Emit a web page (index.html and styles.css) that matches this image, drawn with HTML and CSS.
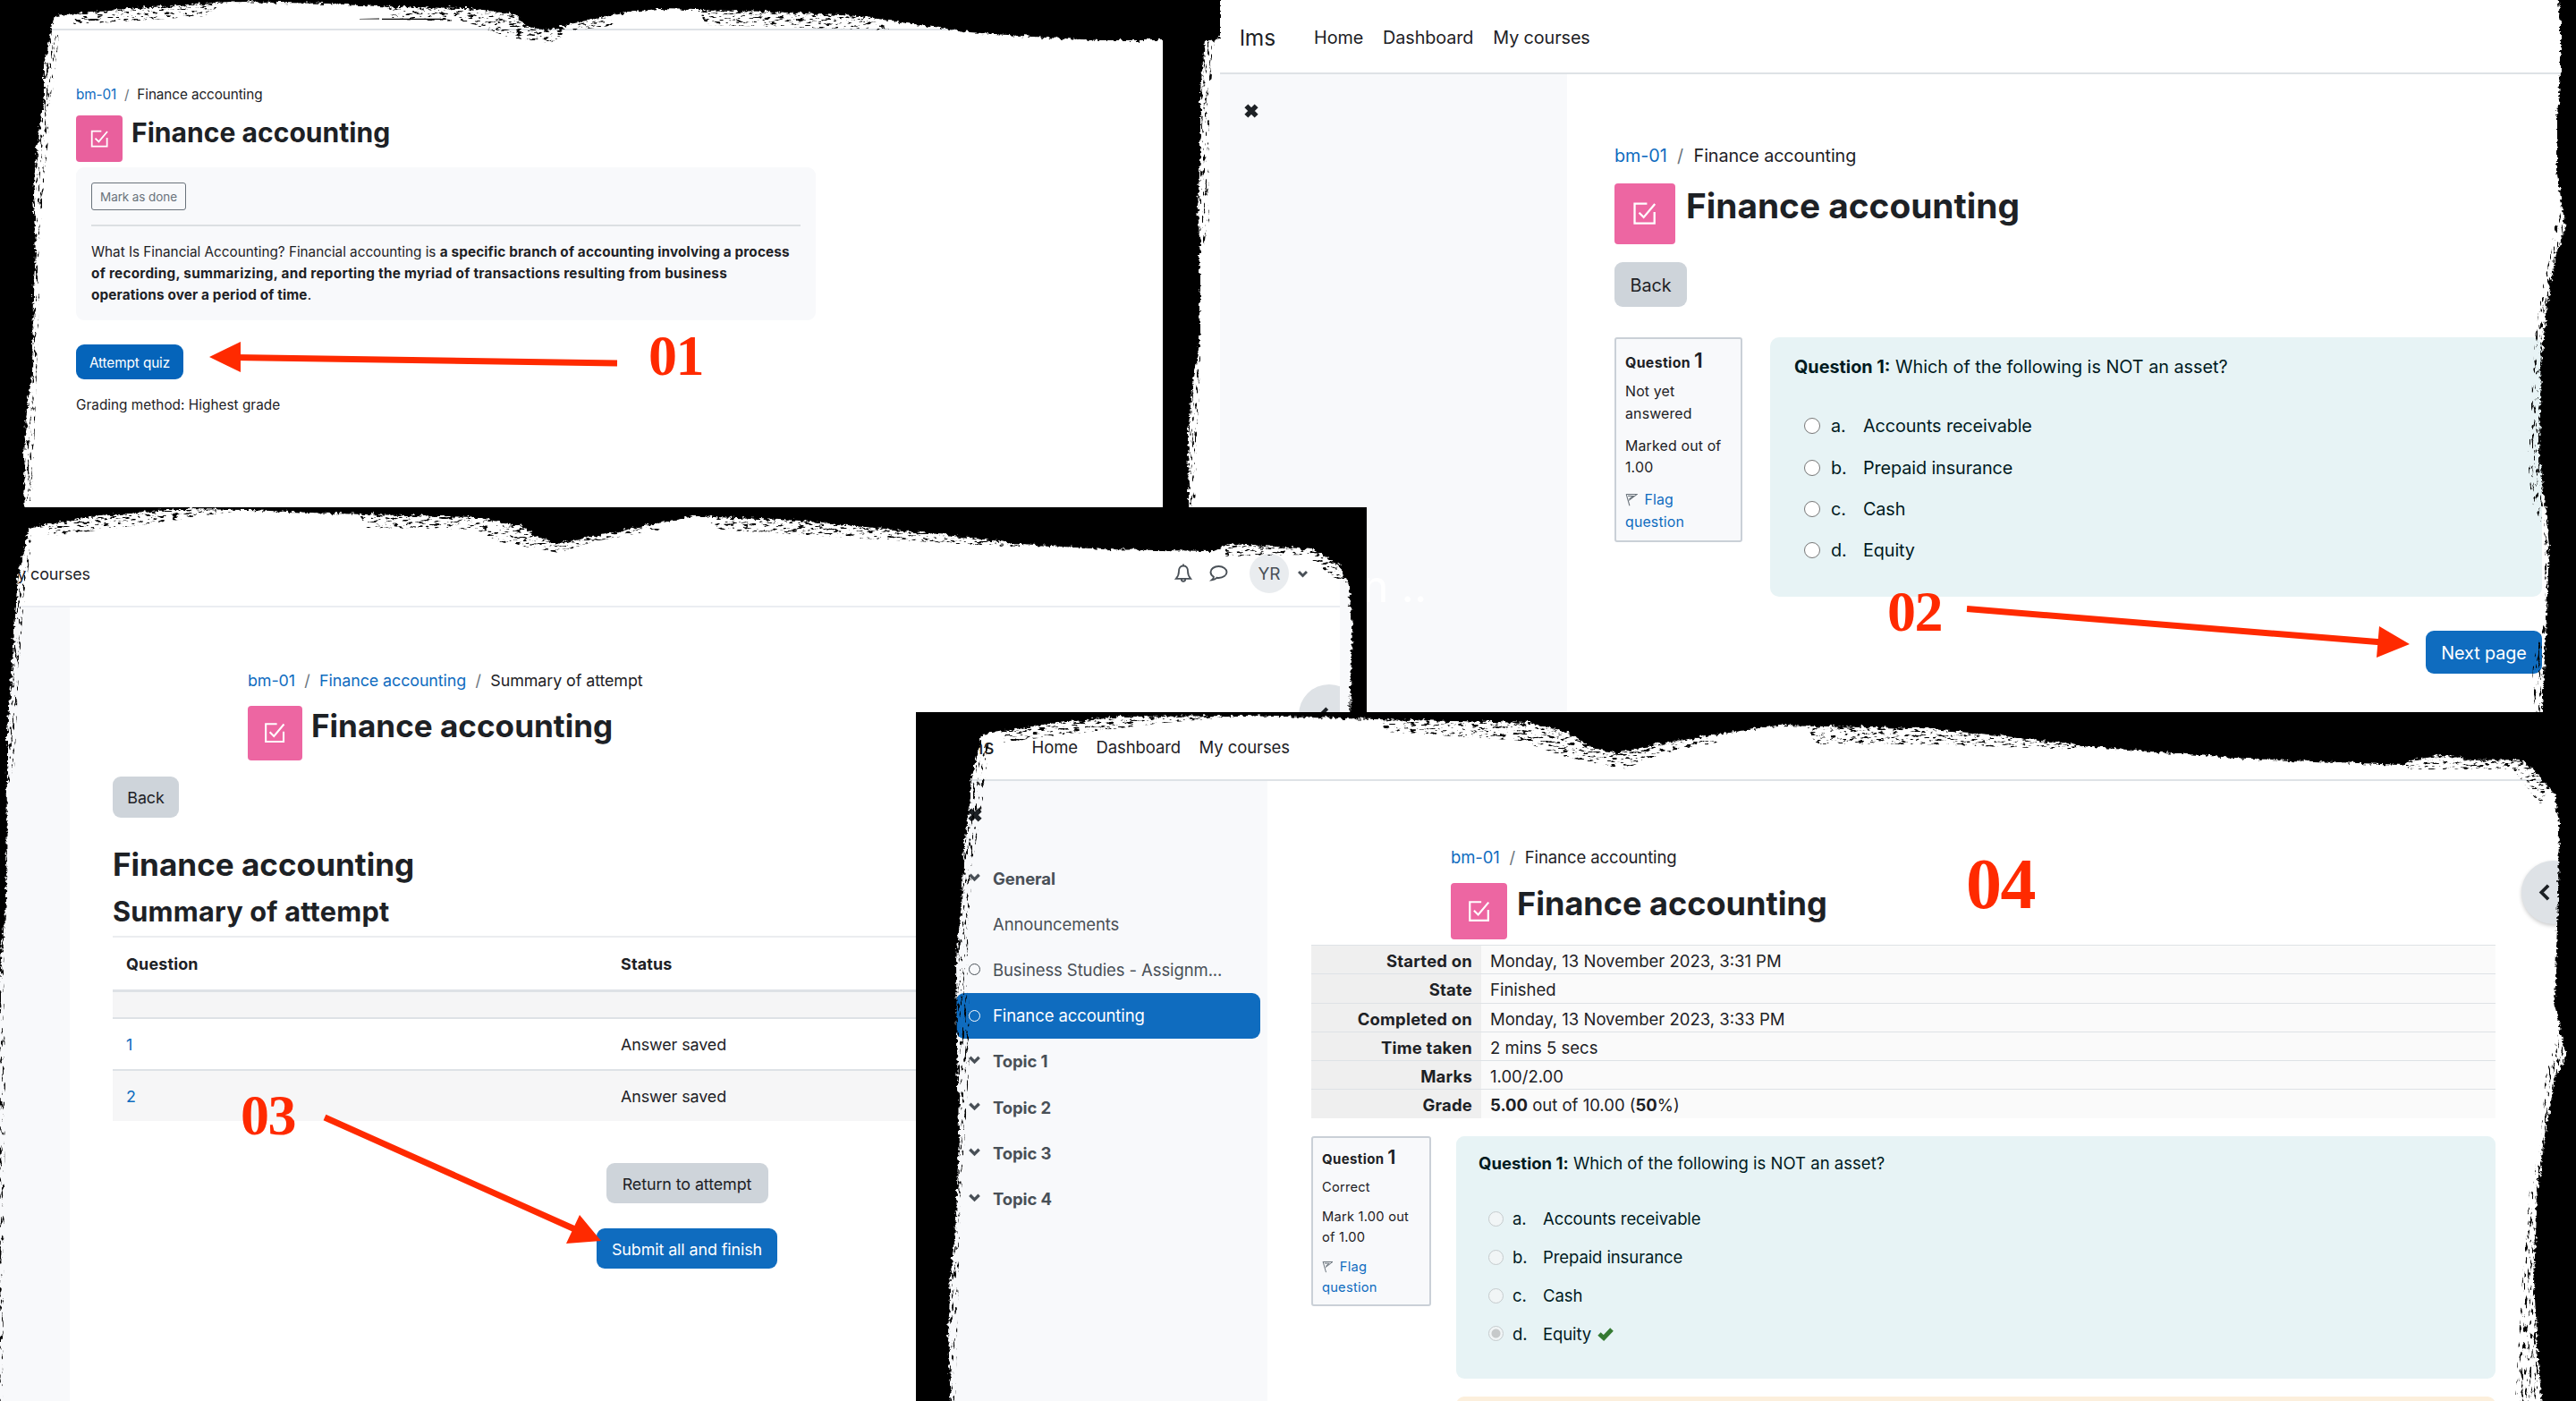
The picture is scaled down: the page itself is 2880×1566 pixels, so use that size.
FILE: index.html
```
<!DOCTYPE html>
<html lang="en">
<head>
<meta charset="utf-8">
<title>Quiz attempt guide</title>
<link rel="stylesheet" href="styles.css">
</head>
<body>
<svg class="defs" width="0" height="0">
  <defs>
    <symbol id="quiz" viewBox="0 0 24 24"><path d="M14.300 2.900H2.900v18.200h18.200V10.700M7 11.300l4.200 4.200L21.500 3.200" fill="none" stroke="currentColor" stroke-width="1.900"/></symbol>
    <symbol id="flag" viewBox="0 0 16 16"><path d="M1.300 1l4.200 14.500M1.300 1.300h13.200L4.500 9M3.500 3.300l6.500.2-5 3.700" fill="none" stroke="currentColor" stroke-width="1.200"/></symbol>
    <symbol id="cross" viewBox="0 0 16 16"><path d="M3 3l10 10M13 3L3 13" stroke="currentColor" stroke-width="5"/></symbol>
    <symbol id="down" viewBox="0 0 16 16"><path d="M2.500 5L8 10.500 13.500 5" fill="none" stroke="currentColor" stroke-width="3.600"/></symbol>
    <symbol id="left" viewBox="0 0 16 16"><path d="M11 1.500L4.500 8l6.500 6.500" fill="none" stroke="currentColor" stroke-width="3.200"/></symbol>
    <symbol id="bell" viewBox="0 0 20 22"><path d="M10 2.500c-3.600 0-5 2.800-5 6 0 4.500-1.500 6.500-3.200 8.300h16.400C16.500 15 15 13 15 8.500c0-3.200-1.400-6-5-6zM10 2.500V.5M7.800 17.500c0 3 4.400 3 4.400 0" fill="none" stroke="currentColor" stroke-width="1.800"/></symbol>
    <symbol id="chat" viewBox="0 0 22 20"><path d="M11.500 2C6.500 2 2.500 4.800 2.500 8.500c0 2.200 1.300 4 3.400 5.200 0 1.400-.9 2.600-2 3.500 2.300-.2 4.200-1 5.500-2.400.7.100 1.400.2 2.100.2 5 0 9-2.900 9-6.500S16.500 2 11.500 2z" fill="none" stroke="currentColor" stroke-width="1.900"/></symbol>
    <symbol id="check" viewBox="0 0 18 16"><path d="M2 8l5 4.500L16 3" fill="none" stroke="currentColor" stroke-width="5"/></symbol>
    <filter id="rough" x="-5%" y="-5%" width="110%" height="110%">
      <feTurbulence type="fractalNoise" baseFrequency="0.2 0.24" numOctaves="4" seed="4" result="n"/>
      <feDisplacementMap in="SourceGraphic" in2="n" scale="7" xChannelSelector="R" yChannelSelector="G"/>
    </filter>
    <filter id="dryH" x="-5%" y="-5%" width="110%" height="110%">
      <feTurbulence type="fractalNoise" baseFrequency="0.13 0.42" numOctaves="4" seed="9"/>
      <feColorMatrix values="0 0 0 0 0  0 0 0 0 0  0 0 0 0 0  8 0 0 0 -4.500" result="t"/>
      <feComposite in="SourceGraphic" in2="t" operator="in"/>
    </filter>
    <filter id="dryV" x="-5%" y="-5%" width="110%" height="110%">
      <feTurbulence type="fractalNoise" baseFrequency="0.42 0.1" numOctaves="4" seed="12"/>
      <feColorMatrix values="0 0 0 0 0  0 0 0 0 0  0 0 0 0 0  8 0 0 0 -4.600" result="t"/>
      <feComposite in="SourceGraphic" in2="t" operator="in"/>
    </filter>
  </defs>
</svg>

<main class="board">

  <section class="panel intro">
    <div class="rule"></div>
    <div class="body">
      <nav class="crumbs"><a>bm-01</a><i>/</i><span>Finance accounting</span></nav>
      <header class="title"><span class="tile"><svg><use href="#quiz"/></svg></span><h1>Finance accounting</h1></header>
      <div class="card">
        <button class="outline">Mark as done</button>
        <hr>
        <p>What Is Financial Accounting? Financial accounting is <b>a specific branch of accounting involving a process<br><span class="wide">of recording, summarizing, and reporting the myriad of transactions resulting from business</span><br>operations over a period of time</b>.</p>
      </div>
      <button class="btn primary">Attempt quiz</button>
      <p class="grading">Grading method: Highest grade</p>
    </div>
    <svg class="brush" viewBox="0 0 1300 568">
      <path filter="url(#rough)" d="M-40-40H1340V45L1230 45 1169 42 1084 36 960 18 857 13 735 10 700 14 637 27 612 34 590 30 575 16 526 9 441 8 367 4 257 2 153 9 61 18 56 40 49 73 49 109 41 164 37 218 40 284 37 327 36 418 30 454 27 509 28 620H-40z"/>
      <path class="dry" filter="url(#dryH)" d="M90 8L250 2 230 18 80 28zM430 5L560 8 600 32 640 25 680 20 690 28 640 34 615 48 570 42 520 24 440 22zM780 11L870 12 970 20 1000 34 870 30 790 28z"/>
      <path d="M402 21l22-.5v1h-22zM427 20.800h66v1.200h-66z"/>
      <path class="dry" filter="url(#dryV)" d="M50 24L66 40 58 110 50 200 42 300 44 330 36 560 24 560 30 300z"/>
    </svg>
  </section>

  <section class="panel attempt">
    <header class="topbar"><span class="brand">lms</span><a>Home</a><a>Dashboard</a><a>My courses</a></header>
    <div class="split">
      <aside><svg class="x"><use href="#cross"/></svg><span class="ghost">n ..</span></aside>
      <div class="body">
        <nav class="crumbs"><a>bm-01</a><i>/</i><span>Finance accounting</span></nav>
        <header class="title"><span class="tile"><svg><use href="#quiz"/></svg></span><h1>Finance accounting</h1></header>
        <button class="btn grey">Back</button>
        <div class="question">
          <div class="info">
            <h3>Question <b>1</b></h3>
            <p>Not yet<br>answered</p><p>Marked out of<br>1.00</p>
            <p><a><svg><use href="#flag"/></svg>Flag<br>question</a></p>
          </div>
          <div class="formulation">
            <p><b>Question 1:</b> Which of the following is NOT an asset?</p>
            <ul>
              <li><i class="radio"></i><em>a.</em>Accounts receivable</li>
              <li><i class="radio"></i><em>b.</em>Prepaid insurance</li>
              <li><i class="radio"></i><em>c.</em>Cash</li>
              <li><i class="radio"></i><em>d.</em>Equity</li>
            </ul>
          </div>
        </div>
        <button class="btn primary next">Next page</button>
      </div>
    </div>
    <svg class="brush" viewBox="1300 0 1580 796">
      <path filter="url(#rough)" d="M1290-20H1364V43L1347 46 1342 102 1342 178 1339 230 1341 265 1341 383 1333 434 1328 485 1330 620H1290z"/>
      <path d="M1300 0H1364V40H1300z"/>
      <path filter="url(#rough)" d="M2900-20H2857L2863 25 2863 82 2859 128 2859 194 2868 255 2857 286 2847 347 2841 408 2839 510 2847 577 2850 612 2846 714 2840 830H2900z"/>
      <path class="dry" filter="url(#dryV)" d="M1342 50L1358 44 1352 120 1352 250 1342 290 1342 400 1336 567 1326 567zM2860 230L2850 290 2836 350 2826 510 2830 560 2844 590 2846 690 2832 740 2830 796 2846 796 2852 600 2845 400 2868 260z"/>
    </svg>
  </section>

  <section class="panel summary">
    <header class="topbar">
      <a>My courses</a>
      <span class="tools"><svg class="bell"><use href="#bell"/></svg><svg class="chat"><use href="#chat"/></svg><span class="avatar">YR</span><svg class="caret"><use href="#down"/></svg></span>
    </header>
    <div class="split">
      <aside></aside>
      <div class="body">
        <div class="inset">
          <nav class="crumbs"><a>bm-01</a><i>/</i><a>Finance accounting</a><i>/</i><span>Summary of attempt</span></nav>
          <header class="title"><span class="tile"><svg><use href="#quiz"/></svg></span><h1>Finance accounting</h1></header>
        </div>
        <button class="btn grey">Back</button>
        <h2>Finance accounting</h2>
        <h3>Summary of attempt</h3>
        <div class="grid">
          <div class="row head"><span>Question</span><span>Status</span></div>
          <div class="row gap"></div>
          <div class="row"><a>1</a><span>Answer saved</span></div>
          <div class="row shade"><a>2</a><span>Answer saved</span></div>
        </div>
        <div class="actions"><button class="btn grey">Return to attempt</button><button class="btn primary">Submit all and finish</button></div>
      </div>
    </div>
    <span class="drawer"><svg><use href="#left"/></svg></span>
    <div class="edge"></div>
    <svg class="brush" viewBox="0 567 1528 999">
      <path filter="url(#rough)" d="M-40 530H1560V840H1508L1512 701 1508 656 1497 631 1467 614 1412 610 1375 608 1357 616 1234 614 1142 608 1040 596 895 582 776 577 720 588 663 600 623 608 600 600 584 588 531 578 371 574 279 570 199 569 100 578 32 590 20 643 17 688 13 752 8 817 8 849 7 1009 1 1073 -4 1137 -8 1600H-40z"/>
      <path class="dry" filter="url(#dryH)" d="M60 576L200 568 260 572 180 584 50 600zM400 572L560 578 610 596 660 597 720 588 740 592 670 604 625 618 560 606 530 592 410 590zM790 577L900 580 1060 594 1140 605 1140 612 900 598 800 592zM1370 604L1480 606 1505 650 1490 645 1460 620 1370 622z"/>
      <path class="dry" filter="url(#dryV)" d="M24 590L36 600 25 690 20 770 16 860 8 880 8 1000 4 1080 6 1200 3 1566 -4 1566 -4 1000z"/>
      <path d="M1514 567H1528V800H1514z"/>
    </svg>
  </section>

  <section class="panel review">
    <header class="topbar"><span class="brand">lms</span><a>Home</a><a>Dashboard</a><a>My courses</a></header>
    <div class="split">
      <aside>
        <svg class="x"><use href="#cross"/></svg>
        <ul class="tree">
          <li class="top"><svg><use href="#down"/></svg>General</li>
          <li><u></u>Announcements</li>
          <li><i></i>Business Studies - Assignm...</li>
          <li class="active"><i></i>Finance accounting</li>
          <li class="top"><svg><use href="#down"/></svg>Topic 1</li>
          <li class="top"><svg><use href="#down"/></svg>Topic 2</li>
          <li class="top"><svg><use href="#down"/></svg>Topic 3</li>
          <li class="top"><svg><use href="#down"/></svg>Topic 4</li>
        </ul>
      </aside>
      <div class="body">
        <div class="inset">
          <nav class="crumbs"><a>bm-01</a><i>/</i><span>Finance accounting</span></nav>
          <header class="title"><span class="tile"><svg><use href="#quiz"/></svg></span><h1>Finance accounting</h1></header>
        </div>
        <dl class="facts">
          <dt>Started on</dt><dd>Monday, 13 November 2023, 3:31 PM</dd>
          <dt>State</dt><dd>Finished</dd>
          <dt>Completed on</dt><dd>Monday, 13 November 2023, 3:33 PM</dd>
          <dt>Time taken</dt><dd>2 mins 5 secs</dd>
          <dt>Marks</dt><dd>1.00/2.00</dd>
          <dt>Grade</dt><dd><b>5.00</b> out of 10.00 (<b>50</b>%)</dd>
        </dl>
        <div class="question">
          <div class="info">
            <h3>Question <b>1</b></h3>
            <p>Correct</p><p>Mark 1.00 out<br>of 1.00</p>
            <p><a><svg><use href="#flag"/></svg>Flag<br>question</a></p>
          </div>
          <div class="formulation">
            <p><b>Question 1:</b> Which of the following is NOT an asset?</p>
            <ul>
              <li><i class="radio"></i><em>a.</em>Accounts receivable</li>
              <li><i class="radio"></i><em>b.</em>Prepaid insurance</li>
              <li><i class="radio"></i><em>c.</em>Cash</li>
              <li><i class="radio on"></i><em>d.</em>Equity<svg class="tick"><use href="#check"/></svg></li>
            </ul>
          </div>
        </div>
        <div class="feedback"></div>
      </div>
    </div>
    <span class="drawer"><svg><use href="#left"/></svg></span>
    <svg class="brush" viewBox="1024 796 1856 770">
      <path filter="url(#rough)" d="M990 760H2900V1600H2844L2837 1507 2833 1432 2837 1331 2844 1281 2856 1206 2869 1181 2856 1121 2860 1006 2861 920 2856 888 2837 865 2819 849 2762 850 2737 843 2694 850 2687 855 2512 848 2337 835 2244 823 2150 814 1987 811 1900 824 1846 833 1810 842 1780 836 1755 820 1712 808 1540 804 1387 800 1253 801 1173 809 1098 821 1086 868 1084 900 1078 945 1075 1009 1069 1073 1070 1170 1072 1266 1069 1362 1063 1426 1060 1490 1064 1600H990z"/>
      <path class="dry" filter="url(#dryH)" d="M1130 808L1260 799 1400 800 1300 808 1120 830zM1540 803L1730 808 1790 836 1850 830 1910 822 1920 830 1860 842 1815 860 1750 846 1700 828 1550 818zM2020 811L2160 812 2340 832 2330 838 2150 832 2030 832zM2690 850L2740 842 2820 848 2850 880 2840 900 2810 860 2690 860z"/>
      <path class="dry" filter="url(#dryV)" d="M1090 825L1106 830 1098 900 1088 960 1082 1040 1084 1180 1074 1350 1068 1566 1056 1566 1066 1300 1064 1050zM2862 1150L2846 1200 2840 1280 2828 1330 2820 1430 2812 1566 2846 1566 2846 1300 2868 1190z"/>
    </svg>
  </section>

  <svg class="marks" viewBox="0 0 2880 1566">
    <g stroke="#ff2a00" stroke-width="7" fill="#ff2a00">
      <path d="M262 399.500L690 406M2199 680.500L2664 718M363 1249L645 1375"/>
      <path stroke="none" d="M234 399L269 382V416zM2694 720L2660 700 2657 735zM672 1387L648 1358 633 1390z"/>
    </g>
  </svg>
  <span class="num n1">01</span><span class="num n2">02</span><span class="num n3">03</span><span class="num n4">04</span>
</main>
</body>
</html>
```
FILE: styles.css
```
* { box-sizing: border-box; margin: 0; padding: 0; }
body { background: #000; font-family: Inter, "Liberation Sans", sans-serif; color: #1d2125; letter-spacing: -.006em; }
ul { list-style: none; }
button { font: inherit; letter-spacing: inherit; border: 0; display: block; }
i, em { font-style: normal; }
.defs { position: absolute; }

.board { position: relative; width: 2880px; height: 1566px; overflow: hidden; background: #000; }
.panel { position: absolute; overflow: hidden; background: #fff; white-space: nowrap; }
.brush, .marks { position: absolute; inset: 0; width: 100%; height: 100%; fill: #000; }

.crumbs { display: flex; line-height: 24px; }
.crumbs i { color: #6a737b; padding: 0 .58em; }
a { color: #0f6cbf; }
.title { display: flex; align-items: flex-start; }
.title h1 { font-weight: 700; letter-spacing: 0; }
.tile { display: grid; place-items: center; background: #ed66a2; color: #fff; border-radius: 4px; flex: none; }
.tile svg { width: 43%; height: 43%; }
.btn { border-radius: 9px; text-align: center; padding-top: 1px; }
.primary { background: #0f6cbf; color: #fff; }
.grey { background: #ced4da; color: #1d2125; }

.topbar { display: flex; align-items: center; border-bottom: 2px solid #dee2e6; }
.topbar a { color: #1d2125; }
.split { display: flex; }
.split aside { background: #f8f9fb; flex: none; }
.body { flex: none; }
.x { display: block; width: 18px; height: 18px; }

.question { display: flex; align-items: flex-start; }
.info { border: 2px solid #cad0d7; border-radius: 3px; background: #f8f9fb; flex: none; letter-spacing: .01em; }
.info h3 { font-weight: 700; letter-spacing: .02em; }
.info h3 b { font-size: 1.45em; font-weight: 600; }
.info svg { width: .9em; height: .95em; margin-right: .45em; color: #6a737b; vertical-align: -.12em; }
.formulation { background: #e7f3f5; color: #001a1e; flex: none; }
.formulation li { display: flex; align-items: center; }
.radio { border: 1.5px solid #767676; border-radius: 50%; background: #fff; flex: none; }

/* Quiz introduction */
.intro { left: 0; top: 0; width: 1300px; height: 568px; font-size: 15.300px; }
.intro .rule { height: 34px; border-bottom: 2px solid #dee2e6; }
.intro .body { padding: 60px 0 0 85px; }
.intro .title { margin-top: 11px; height: 52px; gap: 10px; }
.intro .tile { width: 52px; height: 52px; background: #e9609d; }
.intro h1 { font-size: 30.100px; line-height: 38px; }
.intro .card { margin-top: 6px; width: 827px; height: 171px; padding: 17px; border-radius: 9px; background: #f8f9fb; }
.intro .outline { width: 106px; height: 31px; border: 1px solid #6a737b; border-radius: 3px; background: none; color: #6a737b; font-size: 13.500px; }
.intro hr { border: 0; height: 2px; background: #dcdfe2; margin: 16px 0 17px; }
.intro .card p { line-height: 23.800px; letter-spacing: -.02px; }
.intro .card b { letter-spacing: .14px; }
.intro .card .wide { letter-spacing: .27px; }
.intro .btn { margin-top: 27px; width: 120px; height: 39px; background: #0564ba; }
.intro .grading { margin-top: 17px; line-height: 24px; letter-spacing: .04px; }

/* Question attempt */
.attempt { left: 1300px; top: 0; width: 1580px; height: 796px; padding-left: 64px; font-size: 19.800px; }
.attempt .topbar { height: 83px; padding: 2px 0 0 22px; gap: 22px; }
.brand { font-size: 24.500px; margin-right: 21px; }
.attempt aside { width: 388px; height: 713px; padding: 32px 0 0 26px; }
.ghost { display: block; margin: 492px 0 0 133px; color: #fff; font-size: 50px; line-height: 60px; letter-spacing: 0; }
.attempt .body { padding: 79px 0 0 53px; }
.attempt .title { margin-top: 19px; height: 68px; gap: 12px; }
.attempt .tile { width: 68px; height: 68px; }
.attempt h1 { font-size: 38.800px; line-height: 50px; }
.attempt .grey { margin-top: 20px; width: 81px; height: 50px; }
.attempt .question { margin-top: 34px; gap: 31px; }
.attempt .info { width: 143px; height: 229px; padding: 12px 0 0 10px; font-size: 15.900px; line-height: 24.500px; }
.attempt .info p { margin-top: 11.500px; }
.attempt .info h3 { font-size: 15.900px; line-height: 24px; }
.attempt .info h3 + p { margin-top: 8px; }
.attempt .formulation { width: 863px; height: 290px; border-radius: 10px; padding: 18px 0 0 27px; }
.attempt .formulation p { line-height: 30px; letter-spacing: 0; }
.attempt .formulation ul { margin-top: 28px; padding-left: 11px; }
.attempt .formulation li { height: 46.400px; }
.attempt .radio { width: 18px; height: 18px; margin-right: 12px; }
.attempt em { width: 36px; }
.attempt .next { margin: 38px 0 0 907px; width: 130px; height: 48px; }

/* Summary of attempt */
.summary { left: 0; top: 567px; width: 1528px; height: 999px; font-size: 17.900px; }
.summary .topbar { height: 112px; padding: 38px 65px 0 3px; justify-content: space-between; border-color: #ebedf2; }
.tools { display: flex; align-items: center; color: #495057; }
.bell { width: 20px; height: 22px; }
.chat { width: 22px; height: 20px; margin-left: 18px; }
.avatar { width: 44px; height: 44px; border-radius: 50%; background: #e9ecef; display: grid; place-items: center; margin: 0 9px 0 24px; color: #495057; font-size: 19px; }
.caret { width: 13px; height: 13px; }
.summary aside { width: 78px; height: 887px; }
.summary .body { padding: 70px 0 0 48px; width: 1332px; }
.summary .inset { padding-left: 151px; }
.summary .title { margin-top: 16px; height: 61px; gap: 10px; }
.summary .tile { width: 61px; height: 61px; }
.summary h1, .summary h2 { font-size: 35.100px; line-height: 45px; letter-spacing: 0; }
.summary .body > .grey { margin-top: 18px; width: 74px; height: 46px; }
.summary h2 { margin-top: 30px; }
.summary h3 { font-size: 30.700px; line-height: 40px; margin-top: 10px; letter-spacing: .2px; }
.grid { width: 1284px; margin-top: 7px; border-top: 2px solid #ebedf0; }
.row { display: grid; grid-template-columns: 553px 1fr; align-items: center; height: 58px; padding-left: 15px; border-top: 2px solid #dee2e6; }
.row.head { height: 58px; font-weight: 700; border-top: 0; letter-spacing: .01em; }
.row.gap { height: 31px; background: #f5f5f6; border-top-width: 3px; }
.row.shade { background: #f6f6f7; }
.actions { display: flex; flex-direction: column; align-items: center; gap: 28px; margin-top: 47px; }
.actions .grey { width: 181px; height: 45px; }
.actions .primary { width: 202px; height: 45px; }
.drawer { position: absolute; border-radius: 50%; background: #dee2e6; }
.drawer svg { position: absolute; }
.summary .drawer { left: 1452px; top: 198px; width: 68px; height: 68px; }
.summary .drawer svg { left: 18px; top: 25px; width: 20px; height: 20px; }
.edge { position: absolute; left: 1498px; top: 60px; width: 30px; height: 180px; background: #f8f9fb; }

/* Attempt review */
.review { left: 1024px; top: 796px; width: 1856px; height: 770px; font-size: 18.500px; }
.review .topbar { height: 77px; padding: 3px 0 0 50px; gap: 20.500px; }
.review .brand { font-size: 23px; margin-right: 21.500px; }
.review aside { width: 393px; height: 693px; padding: 29px 8px 0 45px; color: #495057; }
.review .x { margin-left: 12px; color: #1d2125; }
.tree { margin-top: 36px; }
.tree li { display: flex; align-items: center; height: 51.200px; padding-left: 13px; border-radius: 9px; }
.tree .top { font-weight: 700; }
.tree svg { width: 15px; height: 15px; margin-right: 13px; margin-top: -3px; }
.tree i { width: 13px; height: 13px; border: 1.500px solid currentColor; border-radius: 50%; margin: 0 14px 0 1px; }
.tree u { width: 28px; }
.tree .active { background: #0f6cbf; color: #fff; }
.review .body { padding: 73px 0 0 49px; width: 1373px; }
.review .inset { padding-left: 156px; }
.review .title { margin-top: 17px; height: 63px; gap: 11px; }
.review .tile { width: 63px; height: 63px; }
.review h1 { font-size: 36.100px; line-height: 47px; }
.facts { display: grid; grid-template-columns: 190px 1fr; margin-top: 6px; grid-auto-rows: 32.300px; line-height: 34px; }
.facts dt, .facts dd { border-top: 1.500px solid #dee2e6; padding: 0 10px; }
.facts dt { background: #efefef; font-weight: 700; text-align: right; letter-spacing: .01em; }
.facts dd { background: #fafafa; letter-spacing: 0; }
.review .question { margin-top: 20px; gap: 28px; }
.review .info { width: 134px; height: 190px; padding: 9px 0 0 10px; font-size: 14.700px; line-height: 22.900px; letter-spacing: .015em; }
.review .info p { margin-top: 10.200px; }
.review .info h3 { font-size: 15px; line-height: 24px; letter-spacing: .025em; }
.review .info h3 + p { margin-top: 8px; }
.review .formulation { width: 1162px; height: 271px; border-radius: 9px; padding: 15px 0 0 25px; }
.review .formulation p { line-height: 30px; letter-spacing: .001em; }
.review .formulation ul { margin-top: 26px; padding-left: 11px; }
.review .formulation li { height: 42.900px; }
.review .radio { width: 17px; height: 17px; margin-right: 10px; border-color: #c5cbcd; background: #f1f5f6; }
.review .on { background: radial-gradient(circle, #c6c9ca 4.500px, #f1f5f6 5.500px); }
.review em { width: 34px; }
.tick { width: 18px; height: 16px; margin-left: 7px; color: #357a32; }
.feedback { margin: 20px 0 0 162px; width: 1162px; height: 40px; border-radius: 9px; background: #fcefdc; }
.review .drawer { left: 1795px; top: 166px; width: 71px; height: 71px; box-shadow: 0 2px 4px #0003; }
.review .drawer svg { left: 17px; top: 26px; width: 19px; height: 19px; color: #1d2125; }

/* Step numbers placed over the collage */
.num { position: absolute; color: #ff2a00; font: 700 64px/64px "Liberation Serif", serif; letter-spacing: -1.500px; }
.n1 { left: 725px; top: 366px; }
.n2 { left: 2110px; top: 652px; }
.n3 { left: 269px; top: 1215px; }
.n4 { left: 2198px; top: 948px; font-size: 80px; line-height: 80px; }
```
